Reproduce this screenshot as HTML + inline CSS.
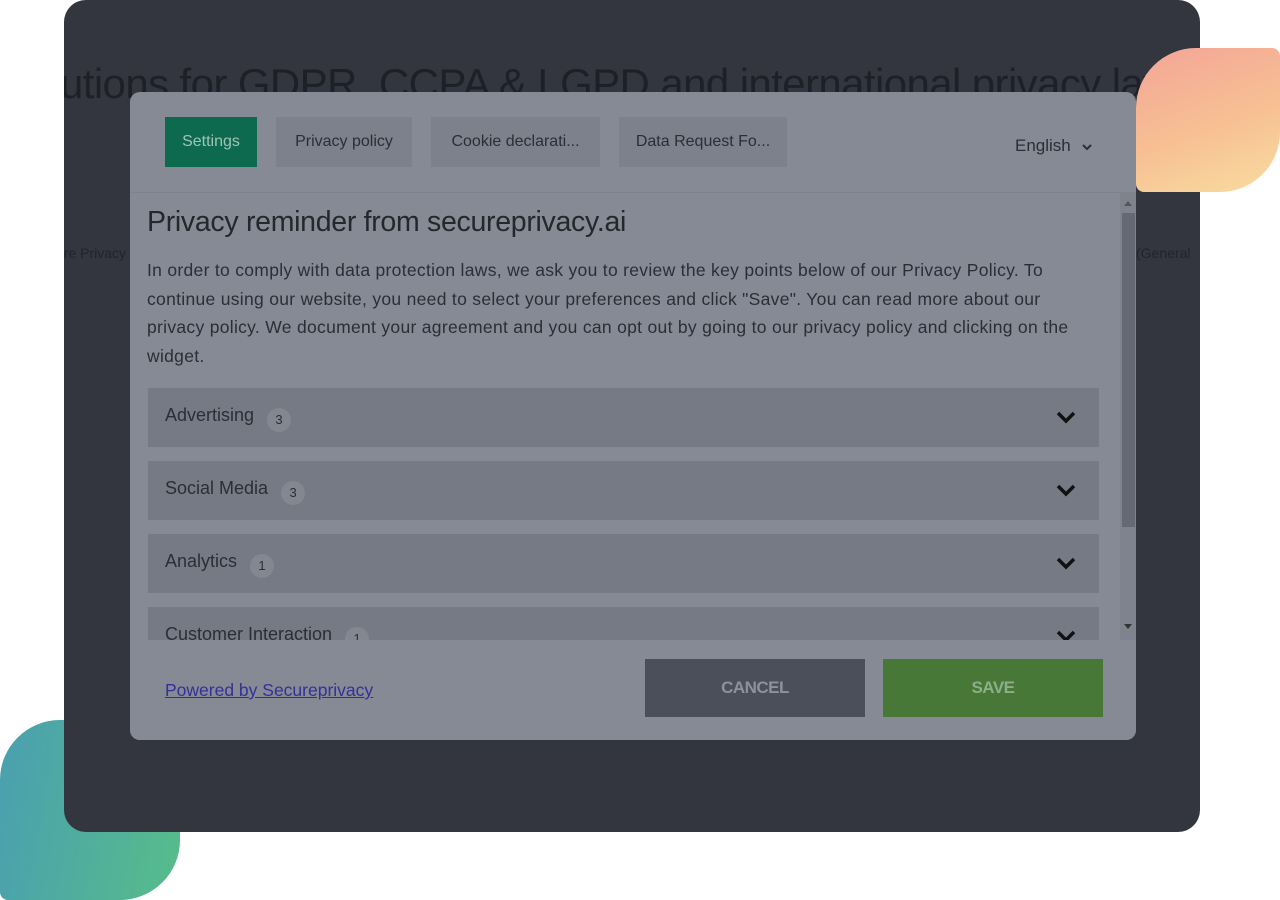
<!DOCTYPE html>
<html><head><meta charset="utf-8"><style>
*{box-sizing:border-box;margin:0;padding:0}
body{width:1280px;height:880px;background:#fff;position:relative;overflow:hidden;font-family:"Liberation Sans",sans-serif}
.blob1{position:absolute;left:1136px;top:48px;width:144px;height:144px;border-radius:60px 8px 60px 8px;background:linear-gradient(160deg,#f3a597 0%,#f7c093 55%,#f8dc9f 100%)}
.blob2{position:absolute;left:0;top:720px;width:180px;height:180px;border-radius:60px 8px 60px 8px;background:linear-gradient(100deg,#4a9fb0,#56bd8a)}
.card{position:absolute;left:64px;top:0;width:1136px;height:832px;background:#33363f;border-radius:22px;overflow:hidden}
.bgh{position:absolute;left:-4px;top:60px;font-size:42px;font-weight:300;color:#1e2027;white-space:nowrap;letter-spacing:-0.6px}
.bgs{position:absolute;top:245px;font-size:14px;color:#22242b;white-space:nowrap}
.modal{position:absolute;left:130px;top:92px;width:1006px;height:648px;background:#868a94;border-radius:10px;overflow:hidden}
.tab{position:absolute;top:25px;height:50px;background:#7d818b;color:#2b2e35;font-size:16px;display:flex;align-items:center;justify-content:center;white-space:nowrap}
.tab.on{background:#0e6a4f;color:#9fc4b4}
.lang{position:absolute;left:885px;top:44px;font-size:17px;color:#2b2e35}
.sep{position:absolute;top:100px;left:0;width:1006px;height:1px;background:#7e828c}
h1{position:absolute;left:17px;top:114px;font-size:28.5px;font-weight:400;color:#25272d;letter-spacing:-0.3px}
.p{position:absolute;left:17px;top:164px;font-size:17.5px;line-height:28.5px;color:#2b2e35;white-space:nowrap;letter-spacing:0.3px}
.acc{position:absolute;left:18px;width:951px;height:59px;background:#767a84;font-size:18px;color:#2b2e35}
.acc span.t{position:absolute;left:17px;top:17px}
.badge{display:inline-block;width:24px;height:24px;border-radius:12px;background:#83878f;font-size:13px;text-align:center;line-height:24px;margin-left:8px;vertical-align:-3px}
.acc svg{position:absolute;right:22px;top:22px}
.sb{position:absolute;left:990px;top:101px;width:16px;height:447px;background:#7f838d}
.thumb{position:absolute;left:992px;top:121px;width:13px;height:314px;background:#656973}
.foot{position:absolute;left:0;top:548px;width:1006px;height:100px;background:#868a94}
.pw{position:absolute;left:35px;top:40px;font-size:17.5px;color:#33309a;text-decoration:underline}
.btn{position:absolute;top:19px;width:220px;height:58px;font-size:17px;font-weight:700;display:flex;align-items:center;justify-content:center;letter-spacing:-0.5px}
</style></head><body>
<div class="blob2"></div>
<div class="card">
 <div class="bgh">utions for GDPR, CCPA &amp; LGPD and international privacy laws</div>
 <div class="bgs" style="left:-8px">ure Privacy</div>
 <div class="bgs" style="left:1072px">(General</div>
</div>
<div class="blob1"></div>
<div class="modal">
  <div class="tab on" style="left:35px;width:92px">Settings</div>
  <div class="tab" style="left:146px;width:136px">Privacy policy</div>
  <div class="tab" style="left:301px;width:169px">Cookie declarati...</div>
  <div class="tab" style="left:489px;width:168px">Data Request Fo...</div>
 <div class="lang">English <svg width="12" height="8" viewBox="0 0 12 8" style="margin-left:6px"><path d="M2 2l4 4 4-4" stroke="#2b2e35" stroke-width="2" fill="none"/></svg></div>
 <div class="sep"></div>
 <h1>Privacy reminder from secureprivacy.ai</h1>
 <div class="p">In order to comply with data protection laws, we ask you to review the key points below of our Privacy Policy. To<br>continue using our website, you need to select your preferences and click "Save". You can read more about our<br>privacy policy. We document your agreement and you can opt out by going to our privacy policy and clicking on the<br>widget.</div>
 <div class="acc" style="top:296px"><span class="t">Advertising <span class="badge">3</span></span><svg width="22" height="14" viewBox="0 0 22 14"><path d="M3 3l8 8 8-8" stroke="#111" stroke-width="3.5" fill="none"/></svg></div>
 <div class="acc" style="top:369px"><span class="t">Social Media <span class="badge">3</span></span><svg width="22" height="14" viewBox="0 0 22 14"><path d="M3 3l8 8 8-8" stroke="#111" stroke-width="3.5" fill="none"/></svg></div>
 <div class="acc" style="top:442px"><span class="t">Analytics <span class="badge">1</span></span><svg width="22" height="14" viewBox="0 0 22 14"><path d="M3 3l8 8 8-8" stroke="#111" stroke-width="3.5" fill="none"/></svg></div>
 <div class="acc" style="top:515px"><span class="t">Customer Interaction <span class="badge">1</span></span><svg width="22" height="14" viewBox="0 0 22 14"><path d="M3 3l8 8 8-8" stroke="#111" stroke-width="3.5" fill="none"/></svg></div>
 <div class="sb"></div><div class="thumb"></div>
 <svg style="position:absolute;left:994px;top:108px" width="8" height="6"><path d="M0 6L4 1 8 6Z" fill="#555"/></svg>
 <svg style="position:absolute;left:994px;top:532px" width="8" height="6"><path d="M0 0L4 5 8 0Z" fill="#333"/></svg>
 <div class="foot">
  <div class="pw">Powered by Secureprivacy</div>
  <div class="btn" style="left:515px;background:#4b4f59;color:#8d919a">CANCEL</div>
  <div class="btn" style="left:753px;background:#477838;color:#8fae87">SAVE</div>
 </div>
</div>
</body></html>
